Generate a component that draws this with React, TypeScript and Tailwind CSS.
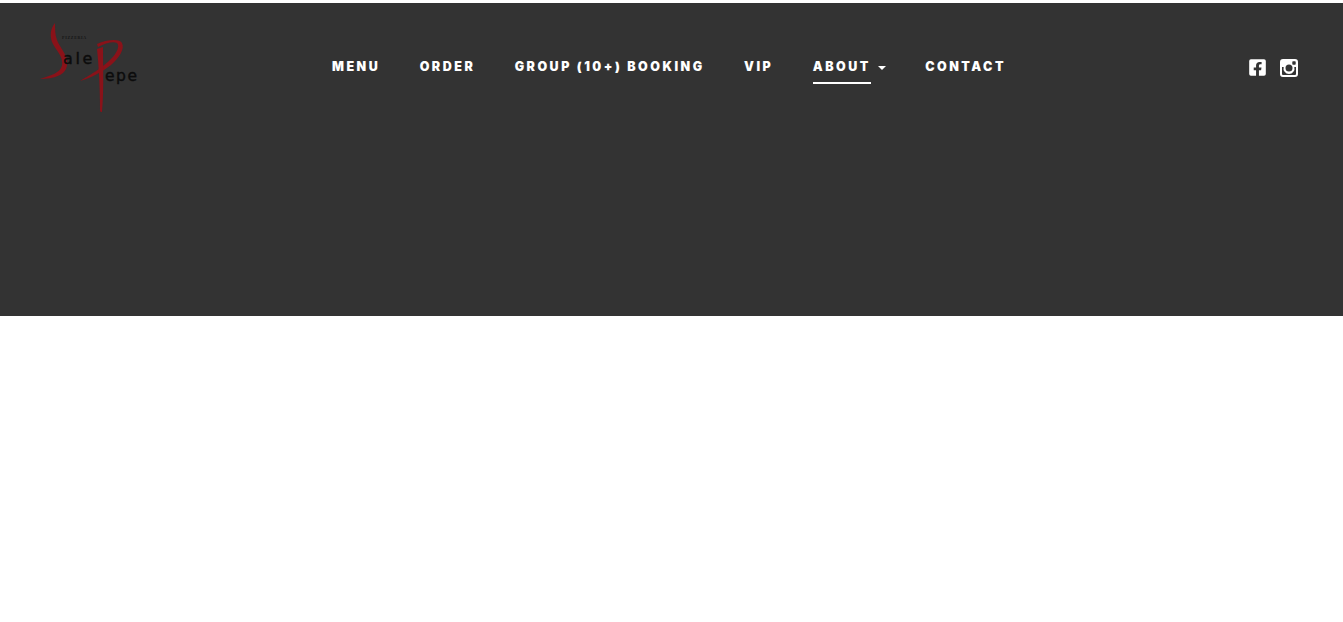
import React from 'react'
import { FaFacebookSquare } from 'react-icons/fa'

const links = ['MENU', 'ORDER', 'GROUP (10+) BOOKING', 'VIP', 'ABOUT', 'CONTACT']

const Logo = () => (
  <svg width="100" height="92" viewBox="40 22 100 92" className="block">
    <g fill="#8a1219">
      <path d="M55 23C50 29 50 36 52 42C55 49 61 54 62 61C63 67 60 71 54 74C50 76 45 77 40 79C46 79 54 78 60 75C66 72 68 66 67 60C65 52 59 46 57 40C55 35 55 29 55 23Z" />
      <path d="M98 47C106 43 113 41 117 43C120 46 117 53 111 59C103 67 92 74 80 81C91 78 102 72 111 65C119 58 125 49 122 43C119 38 106 40 97 44Z" />
      <path d="M97 49L103 47C103 68 104 90 102 112C101 112 100 112 100 110C100 90 99 68 97 49Z" />
    </g>
    <text x="62" y="39" fontSize="4" fontWeight="700" letterSpacing="0.7" fill="#151515" fontFamily="'Liberation Serif', serif">PIZZERIA</text>
    <text x="63" y="63.5" fontSize="16" letterSpacing="2.6" stroke="#0c0c0c" strokeWidth="0.4" fill="#0c0c0c" fontFamily="'DejaVu Sans', sans-serif">ale</text>
    <text x="105" y="81" fontSize="15.5" letterSpacing="1.5" stroke="#0c0c0c" strokeWidth="0.4" fill="#0c0c0c" fontFamily="'DejaVu Sans', sans-serif">epe</text>
  </svg>
)

const InstagramIcon = () => (
  <svg width="18" height="18" viewBox="0 0 18 18" className="block">
    <path
      fillRule="evenodd"
      fill="#fff"
      d="M3 0H15A3 3 0 0 1 18 3V15A3 3 0 0 1 15 18H3A3 3 0 0 1 0 15V3A3 3 0 0 1 3 0ZM2 8V15A1 1 0 0 0 3 16H15A1 1 0 0 0 16 15V8H14.3A5.5 5.5 0 1 1 3.7 8ZM9 5.5A3.5 3.5 0 1 0 9 12.5A3.5 3.5 0 1 0 9 5.5ZM13 2.3A.7.7 0 0 0 12.3 3V5A.7.7 0 0 0 13 5.7H15A.7.7 0 0 0 15.7 5V3A.7.7 0 0 0 15 2.3Z"
    />
  </svg>
)

export default function App() {
  return (
    <div className="min-h-[622px] bg-white pt-[3px] font-['Inter',sans-serif]">
      <header className="h-[313px] bg-[#333333]">
        <div className="flex items-start pl-[40px] pr-[45px] pt-[19px]">
          <a className="block w-[292px]">
            <Logo />
          </a>
          <nav className="flex gap-[39.4px] pt-[35px] text-[12.5px] font-black leading-[20px] tracking-[2.5px] text-white">
            {links.map((link) =>
              link === 'ABOUT' ? (
                <div key={link} className="relative flex">
                  <span className="border-b-2 border-white pb-[5px]">{link}</span>
                  <span className="mt-[9px] ml-[7px] h-0 w-0 border-x-[4px] border-t-[4px] border-x-transparent border-t-white" />
                </div>
              ) : (
                <span key={link}>{link}</span>
              ),
            )}
          </nav>
          <div className="ml-auto flex items-center gap-[13px] pt-[36px] text-white">
            <FaFacebookSquare size={19} />
            <InstagramIcon />
          </div>
        </div>
      </header>
    </div>
  )
}
